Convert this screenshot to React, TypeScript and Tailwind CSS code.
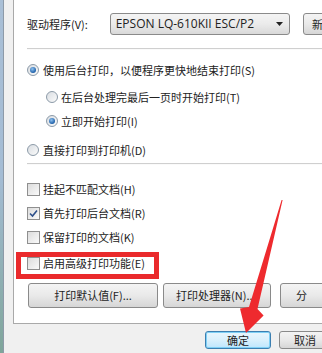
import React from "react";

function Radio({ checked }: { checked?: boolean }) {
  return (
    <div className="w-[12px] h-[12px] rounded-full border border-[#8c9aa8] bg-gradient-to-br from-[#d9dde2] to-[#fbfbfb] flex items-center justify-center shrink-0">
      {checked && (
        <div className="w-[6px] h-[6px] rounded-full bg-[radial-gradient(circle_at_40%_35%,#8fc2f0,#1d5fa8_70%)]" />
      )}
    </div>
  );
}

function Check({ checked }: { checked?: boolean }) {
  return (
    <div className="w-[13px] h-[13px] border border-[#8f8f8f] bg-gradient-to-br from-[#dcdcdc] to-[#fafafa] flex items-center justify-center shrink-0">
      {checked && (
        <svg width="9" height="9" viewBox="0 0 9 9">
          <path d="M1 4.5 L3.5 7 L8 1.5" stroke="#2d4f8a" strokeWidth="1.6" fill="none" />
        </svg>
      )}
    </div>
  );
}

function Btn({ children, className = "" }: { children: React.ReactNode; className?: string }) {
  return (
    <div
      className={
        "flex items-center justify-center rounded-[3px] border border-[#8a8a8a] bg-gradient-to-b from-[#f4f4f4] via-[#e9e9e9] to-[#d6d6d6] text-[11px] text-[#1e1e1e] shrink-0 " +
        className
      }
    >
      {children}
    </div>
  );
}

export default function App() {
  return (
    <div
      className="relative w-[322px] h-[353px] overflow-hidden bg-[#f0f0f0] flex text-[11px] text-[#222]"
      style={{ fontFamily: '"Noto Sans CJK SC", "Noto Sans", sans-serif' }}
    >
      <div className="flex h-full shrink-0">
        <div className="w-[3px] h-full bg-gradient-to-b from-[#a9bfd6] via-[#a4bcd4] to-[#7fa59a]" />
        <div className="w-[1px] h-full bg-[#8d9aa8]" />
      </div>
      <div className="flex flex-col pl-[9px] shrink-0">
        <div className="h-[324px] w-[330px] border-l border-b border-[#a9a9a9] bg-white flex flex-col pl-[13px]">
          <div className="mt-[13px] h-[22px] flex items-center">
            <div className="w-[83px] leading-none">驱动程序(V):</div>
            <div className="w-[181px] h-[22px] rounded-[3px] border border-[#8a8a8a] bg-gradient-to-b from-[#f4f4f4] via-[#ebebeb] to-[#d9d9d9] flex items-center pl-[5px] pr-[6px]">
              <span className="flex-1 leading-none text-[12px]" style={{ fontFamily: '"Open Sans", "Noto Sans", sans-serif' }}>
                EPSON LQ-610KII ESC/P2
              </span>
              <svg width="7" height="4" viewBox="0 0 7 4">
                <path d="M0 0 H7 L3.5 4 Z" fill="#222" />
              </svg>
            </div>
            <Btn className="ml-[13px] w-[40px] h-[22px] justify-start pl-[8px]">新</Btn>
          </div>
          <div className="mt-[13px] h-[1px] bg-[#cfcfcf] shadow-[0_1px_0_#fafafa]" />
          <div className="mt-[11px] h-[20px] flex items-center gap-[4px]">
            <Radio checked />
            <span>使用后台打印，以便程序更快地结束打印(S)</span>
          </div>
          <div className="mt-[7px] h-[20px] flex items-center gap-[3px] pl-[19px]">
            <Radio />
            <span>在后台处理完最后一页时开始打印(T)</span>
          </div>
          <div className="mt-[4px] h-[20px] flex items-center gap-[3px] pl-[19px]">
            <Radio checked />
            <span>立即开始打印(I)</span>
          </div>
          <div className="mt-[9px] h-[20px] flex items-center gap-[4px]">
            <Radio />
            <span>直接打印到打印机(D)</span>
          </div>
          <div className="mt-[3px] h-[1px] bg-[#cfcfcf] shadow-[0_1px_0_#fafafa]" />
          <div className="mt-[15px] h-[20px] flex items-center gap-[3px]">
            <Check />
            <span>挂起不匹配文档(H)</span>
          </div>
          <div className="mt-[4px] h-[20px] flex items-center gap-[3px]">
            <Check checked />
            <span>首先打印后台文档(R)</span>
          </div>
          <div className="mt-[4px] h-[20px] flex items-center gap-[3px]">
            <Check />
            <span>保留打印的文档(K)</span>
          </div>
          <div className="mt-[6px] h-[20px] flex items-center gap-[3px]">
            <Check />
            <span>启用高级打印功能(E)</span>
          </div>
          <div className="mt-[10px] flex items-center ml-[1px]">
            <Btn className="w-[130px] h-[25px]">打印默认值(F)...</Btn>
            <Btn className="ml-[5px] w-[108px] h-[25px] justify-start pl-[12px]">打印处理器(N)...</Btn>
            <Btn className="ml-[9px] w-[60px] h-[25px] justify-start pl-[15px]">分</Btn>
          </div>
        </div>
        <div className="flex pt-[7px] pl-[192px]">
          <div className="w-[66px] h-[18px] rounded-[3px] border border-[#3c7fb1] bg-gradient-to-b from-[#eaf6fd] via-[#d9f0fc] to-[#bee6fd] flex items-center justify-center shadow-[inset_0_0_0_1px_#7fd0f5]">
            确定
          </div>
          <Btn className="ml-[8px] w-[60px] h-[18px] justify-start pl-[14px]">取消</Btn>
        </div>
      </div>

      {/* red highlight box */}
      <div className="absolute left-[16px] top-[252px] w-[143px] h-[27px] border-[5px] border-[#ea2a2c]" />

      {/* red arrow */}
      <svg className="absolute left-0 top-0" width="322" height="353" viewBox="0 0 322 353">
        <polygon
          points="281.6,200 282.6,200 257.5,309 263.6,315.5 246,333 240,308.5 249,307"
          fill="#ee2a2e"
        />
      </svg>
    </div>
  );
}
